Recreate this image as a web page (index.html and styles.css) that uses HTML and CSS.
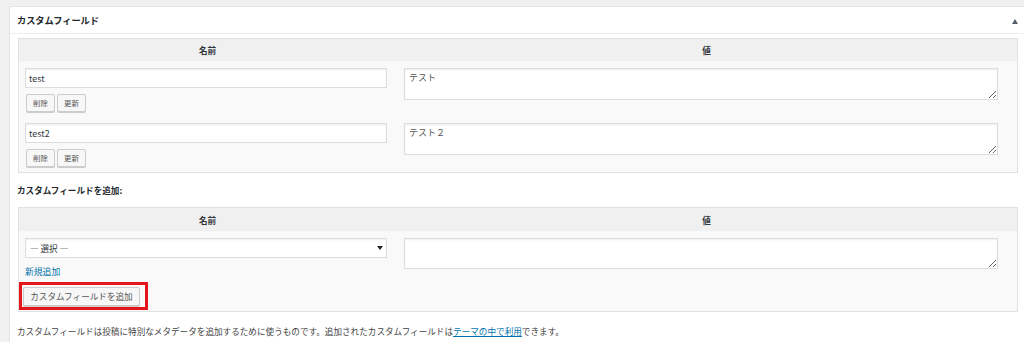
FILE: index.html
```html
<!DOCTYPE html>
<html lang="ja">
<head>
<meta charset="utf-8">
<title>カスタムフィールド</title>
<link rel="stylesheet" href="styles.css">
</head>
<body>
<div class="postbox">
  <div class="postbox-header">
    <h2 class="hndle">カスタムフィールド</h2>
    <span class="toggle-arrow"></span>
  </div>
  <div class="inside">
    <div class="cf-table">
      <div class="cf-head"><div>名前</div><div>値</div></div>
      <div class="cf-row">
        <div class="cell-key">
          <input class="text-input" type="text" value="test">
          <div class="btn-row"><button class="btn-small">削除</button><button class="btn-small">更新</button></div>
        </div>
        <div class="cell-val"><textarea class="val-area">テスト</textarea></div>
      </div>
      <div class="cf-row cf-row-last">
        <div class="cell-key">
          <input class="text-input" type="text" value="test2">
          <div class="btn-row"><button class="btn-small">削除</button><button class="btn-small">更新</button></div>
        </div>
        <div class="cell-val"><textarea class="val-area">テスト２</textarea></div>
      </div>
    </div>

    <p class="add-heading">カスタムフィールドを追加:</p>

    <div class="cf-table">
      <div class="cf-head cf-head-2"><div>名前</div><div>値</div></div>
      <div class="cf-row cf-row-new">
        <div class="cell-key">
          <span class="select-wrap"><select class="key-select"><option>— 選択 —</option></select></span>
          <a class="new-link" href="#">新規追加</a>
          <span class="highlight"><button class="btn-add">カスタムフィールドを追加</button></span>
        </div>
        <div class="cell-val"><textarea class="val-area val-area-new"></textarea></div>
      </div>
    </div>

    <p class="note">カスタムフィールドは投稿に特別なメタデータを追加するために使うものです。追加されたカスタムフィールドは<a href="#">テーマの中で利用</a>できます。</p>
  </div>
</div>
</body>
</html>
```

FILE: styles.css
```css
html, body {
  margin: 0;
  overflow: hidden;
  background: #f1f1f1;
}
body {
  padding: 6px 0 0 9px;
  font-family: "Noto Sans CJK JP", "Noto Sans", sans-serif;
  font-size: 8.6px;
  color: #444;
}
.postbox {
  width: 1020px;
  box-sizing: border-box;
  background: #fff;
  border: 1px solid #e5e5e5;
  box-shadow: 0 1px 1px rgba(0,0,0,.04);
  height: 400px;
}
.postbox-header {
  display: flex;
  align-items: center;
  justify-content: space-between;
  height: 26px;
  border-bottom: 1px solid #eeeeee;
  padding: 0 10px 0 7px;
}
.hndle {
  margin: 0;
  font-size: 9.2px;
  font-weight: bold;
  color: #23282d;
  line-height: 12px;
}
.toggle-arrow {
  width: 0;
  height: 0;
  border-left: 3.5px solid transparent;
  border-right: 3.5px solid transparent;
  border-bottom: 5px solid #555d66;
  margin-top: 2px;
}
.inside {
  padding: 4px 0 0 8px;
}
.cf-table {
  width: 1000px;
  box-sizing: border-box;
  border: 1px solid #e1e1e1;
  background: #f9f9f9;
}
.cf-head {
  display: grid;
  grid-template-columns: 377px 1fr;
  height: 22px;
  align-items: center;
  background: #f0f0f0;
  font-weight: bold;
  color: #32373c;
  text-align: center;
  line-height: 12px;
}
.cf-head-2 { height: 23px; }
.cf-row {
  display: grid;
  grid-template-columns: 377px 1fr;
}
.cell-key {
  padding: 7px 0 4px 6px;
}
.cf-row-last .cell-key { padding-bottom: 5px; }
.cell-val {
  padding: 7px 0 0 8px;
}
.text-input {
  display: block;
  width: 362px;
  height: 20px;
  box-sizing: border-box;
  margin: 0;
  border: 1px solid #dddddd;
  box-shadow: inset 0 1px 2px rgba(0,0,0,.07);
  background: #fff;
  padding: 0 3px;
  font-family: inherit;
  font-size: 9px;
  color: #32373c;
}
.btn-row {
  display: flex;
  gap: 2px;
  margin: 6px 0 0 1px;
}
.btn-small, .btn-add {
  margin: 0;
  font-family: inherit;
  color: #555;
  background: #f7f7f7;
  border: 1px solid #cccccc;
  border-radius: 2px;
  box-shadow: 0 1px 0 #cccccc;
  box-sizing: border-box;
  padding: 0;
}
.btn-small {
  width: 29px;
  height: 18px;
  font-size: 7.4px;
  line-height: 14px;
}
.val-area {
  display: block;
  width: 594px;
  height: 32px;
  box-sizing: border-box;
  margin: 0;
  border: 1px solid #dddddd;
  box-shadow: inset 0 1px 2px rgba(0,0,0,.07);
  background: #fff;
  padding: 3px 4px;
  font-family: inherit;
  font-size: 9px;
  line-height: 12px;
  color: #555;
  resize: both;
}
.val-area-new { height: 31px; }
.add-heading {
  margin: 0 0 0 -1px;
  padding: 11px 0;
  font-weight: bold;
  color: #23282d;
  line-height: 12px;
}
.select-wrap {
  position: relative;
  display: block;
  width: 362px;
}
.select-wrap::after {
  content: "";
  position: absolute;
  right: 4px;
  top: 8px;
  border-left: 3px solid transparent;
  border-right: 3px solid transparent;
  border-top: 4px solid #222;
}
.key-select {
  display: block;
  width: 362px;
  height: 20px;
  box-sizing: border-box;
  margin: 0;
  -webkit-appearance: none;
  appearance: none;
  border: 1px solid #dddddd;
  box-shadow: inset 0 1px 2px rgba(0,0,0,.07);
  background: #fff;
  border-radius: 0;
  padding: 0 4px;
  font-family: inherit;
  font-size: 8.6px;
  color: #32373c;
}
.new-link {
  display: block;
  margin-top: 7px;
  line-height: 13px;
  color: #0073aa;
  text-decoration: none;
  font-size: 8.8px;
}
.highlight {
  position: relative;
  display: inline-block;
  margin: 9px 0 0 -2px;
  vertical-align: top;
}
.highlight::after {
  content: "";
  position: absolute;
  top: -5px;
  left: -4px;
  right: -8px;
  bottom: -4px;
  border: 3px solid #e8141c;
  pointer-events: none;
}
.btn-add {
  display: block;
  width: 117px;
  height: 19px;
  font-size: 8.6px;
  line-height: 15px;
}
.cf-row-new .cell-key {
  padding-bottom: 5px;
}
.note {
  margin: 13px 0 0 -1px;
  line-height: 12px;
  color: #444;
}
.note a {
  color: #0073aa;
  text-decoration: underline;
}
```
